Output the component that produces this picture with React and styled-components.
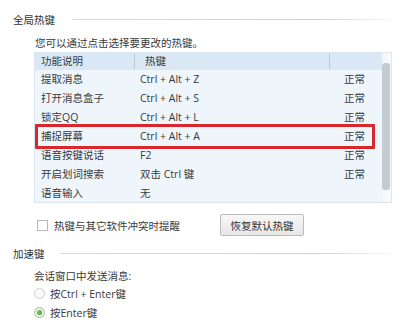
import styled, { createGlobalStyle } from "styled-components";

const GlobalStyle = createGlobalStyle`
  body {
    margin: 0;
    background: #fff;
    font-family: "Open Sans", "Noto Sans CJK SC", sans-serif;
    font-size: 10.5px;
    color: #3a3a3a;
  }
`;

const Page = styled.div`
  width: 418px;
  height: 323px;
  padding-top: 12px;
  box-sizing: border-box;
  overflow: hidden;
`;

const SectionTitle = styled.div`
  display: flex;
  align-items: center;
  gap: ${(p) => p.$gap}px;
  height: 16px;
  line-height: 16px;
  padding-left: 13px;
  margin-top: ${(p) => p.$top || 0}px;
  color: #333;
`;

const TitleLine = styled.div`
  flex: 1;
  height: 1px;
  margin: -2px 16px 0 0;
  background: linear-gradient(to right, #d3dde5, #c6d2db 75%, rgba(198, 210, 219, 0));
`;

const Hint = styled.div`
  margin: 7px 0 0 35px;
  line-height: 16px;
`;

const Table = styled.div`
  display: flex;
  margin: 1px 0 0 34px;
  width: 358px;
  height: 151px;
  box-sizing: border-box;
  border: 1px solid #dce6ee;
  background: #eef5fb;
`;

const List = styled.div`
  flex: 1;
`;

const HeaderRow = styled.div`
  display: grid;
  grid-template-columns: 99px 195px 1fr;
  height: 17px;
  line-height: 17px;
  background: #d9e8f4;
`;

const HeadCell = styled.div`
  padding-left: ${(p) => (p.$divider ? 10 : 6)}px;
  border-left: ${(p) => (p.$divider ? "1px solid #b7c8d6" : "none")};
  margin: 1px 0;
  line-height: 15px;
`;

const Row = styled.div`
  position: relative;
  display: grid;
  grid-template-columns: 99px 195px 1fr;
  height: 19px;
  line-height: 19px;

  &::after {
    content: "";
    display: ${(p) => (p.$marked ? "block" : "none")};
    position: absolute;
    left: 0;
    right: 7px;
    top: -3px;
    bottom: -3px;
    border: 3px solid #d8272d;
    border-radius: 1px;
  }
`;

const Cell = styled.div`
  padding-left: 6px;
  white-space: nowrap;
`;

const StatusCell = styled.div`
  text-align: right;
  padding-right: 17px;
`;

const ScrollTrack = styled.div`
  width: 9px;
  padding-top: 10px;
  padding-bottom: 12px;
  box-sizing: border-box;
  background: linear-gradient(to right, #f3f7fa, #f8fbfd);
`;

const Thumb = styled.div`
  height: 100%;
  width: 8px;
  border-radius: 3px;
  background: #c3ccd2;
`;

const Options = styled.div`
  display: grid;
  grid-template-columns: 183px auto;
  align-items: center;
  margin: 11px 0 0 37px;
  height: 22px;
`;

const CheckLabel = styled.label`
  display: flex;
  align-items: center;
  gap: 6px;
`;

const Box = styled.span`
  width: 11px;
  height: 11px;
  box-sizing: border-box;
  border: 1px solid #b9b9b9;
  background: #fff;
`;

const Button = styled.button`
  width: 84px;
  height: 22px;
  padding: 0;
  border: 1px solid #bcbcbc;
  border-radius: 2px;
  background: linear-gradient(#f7f7f7, #e7e7e7);
  font: inherit;
  color: #333;
  justify-self: start;
`;

const SendLabel = styled.div`
  margin: 6px 0 0 34px;
  line-height: 16px;
`;

const RadioRow = styled.label`
  display: flex;
  align-items: center;
  gap: 5px;
  height: 19px;
  padding-left: 34px;
`;

const Radio = styled.span`
  position: relative;
  width: 11px;
  height: 11px;
  box-sizing: border-box;
  border-radius: 50%;
  border: 1px solid ${(p) => (p.$on ? "#a9b7a6" : "#cfcfcf")};
  background: ${(p) => (p.$on ? "#eaf3e6" : "#fafafa")};

  &::after {
    content: "";
    display: ${(p) => (p.$on ? "block" : "none")};
    position: absolute;
    left: 2px;
    top: 2px;
    width: 5px;
    height: 5px;
    border-radius: 50%;
    background: radial-gradient(circle at 40% 40%, #7cc463, #3f9a31);
  }
`;

const hotkeys = [
  ["提取消息", "Ctrl + Alt + Z", "正常"],
  ["打开消息盒子", "Ctrl + Alt + S", "正常"],
  ["锁定QQ", "Ctrl + Alt + L", "正常"],
  ["捕捉屏幕", "Ctrl + Alt + A", "正常"],
  ["语音按键说话", "F2", "正常"],
  ["开启划词搜索", "双击 Ctrl 键", "正常"],
  ["语音输入", "无", ""],
];

export default function App() {
  return (
    <Page>
      <GlobalStyle />
      <SectionTitle $gap={17}>
        全局热键
        <TitleLine />
      </SectionTitle>
      <Hint>您可以通过点击选择要更改的热键。</Hint>
      <Table>
        <List>
          <HeaderRow>
            <HeadCell>功能说明</HeadCell>
            <HeadCell $divider>热键</HeadCell>
            <HeadCell $divider />
          </HeaderRow>
          {hotkeys.map(([name, key, status]) => (
            <Row key={name} $marked={name === "捕捉屏幕"}>
              <Cell>{name}</Cell>
              <Cell>{key}</Cell>
              <StatusCell>{status}</StatusCell>
            </Row>
          ))}
        </List>
        <ScrollTrack>
          <Thumb />
        </ScrollTrack>
      </Table>
      <Options>
        <CheckLabel>
          <Box />
          热键与其它软件冲突时提醒
        </CheckLabel>
        <Button>恢复默认热键</Button>
      </Options>
      <SectionTitle $gap={15} $top={10}>
        加速键
        <TitleLine />
      </SectionTitle>
      <SendLabel>会话窗口中发送消息:</SendLabel>
      <RadioRow>
        <Radio />
        按Ctrl + Enter键
      </RadioRow>
      <RadioRow>
        <Radio $on />
        按Enter键
      </RadioRow>
    </Page>
  );
}
